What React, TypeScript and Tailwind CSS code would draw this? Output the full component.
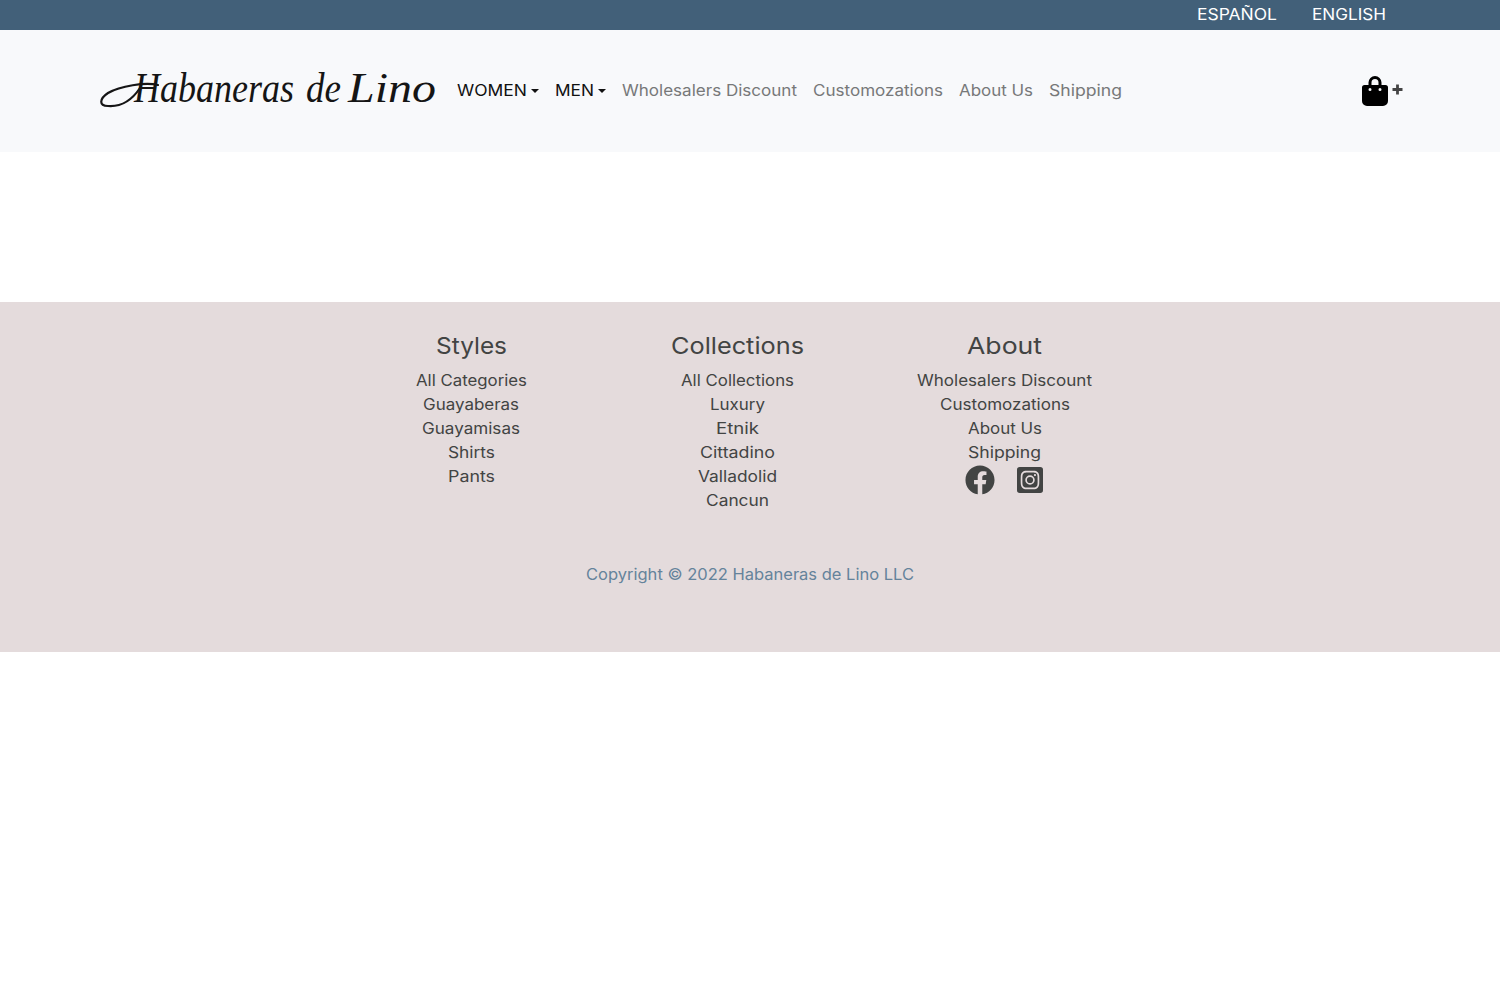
import { useLayoutEffect, useRef } from "react";
import { FaFacebook, FaInstagramSquare } from "react-icons/fa";

/* Text stretched horizontally so that it fills the given width. */
function Wide({ text, width, className = "" }: { text: string; width: number; className?: string }) {
  const ref = useRef<HTMLSpanElement>(null);
  useLayoutEffect(() => {
    const el = ref.current;
    if (!el) return;
    el.style.transform = "none";
    el.style.transform = `scaleX(${width / el.getBoundingClientRect().width})`;
  }, [text, width]);
  return (
    <span className={`inline-block text-left whitespace-nowrap ${className}`} style={{ width }}>
      <span ref={ref} className="inline-block origin-left">
        {text}
      </span>
    </span>
  );
}

function Caret() {
  return <span className="ml-1 -mt-px inline-block border-x-[4.5px] border-t-[4.5px] border-x-transparent border-t-current" />;
}

type Item = [string, number];

const navLinks: Item[] = [
  ["Wholesalers Discount", 175],
  ["Customozations", 130],
  ["About Us", 74],
  ["Shipping", 73],
];

const columns: { title: Item; links: Item[] }[] = [
  {
    title: ["Styles", 71],
    links: [["All Categories", 111], ["Guayaberas", 96], ["Guayamisas", 98], ["Shirts", 47], ["Pants", 47]],
  },
  {
    title: ["Collections", 133],
    links: [["All Collections", 113], ["Luxury", 55], ["Etnik", 43], ["Cittadino", 75], ["Valladolid", 79], ["Cancun", 63]],
  },
  { title: ["About", 75], links: navLinks },
];

function Logo() {
  return (
    <a
      className="relative mt-[-8px] flex h-[54px] w-[337px] items-center pl-[34px] text-[#151515] italic"
      style={{ fontFamily: '"Liberation Serif", serif' }}
    >
      <svg className="absolute left-0 top-[3px]" width="66" height="54" fill="none" stroke="currentColor" strokeWidth="2.2">
        <path d="M58 22C45 19 20 23 8 30C-1 36 -1 43 8 43C21 44 32 37 40 25" strokeLinecap="round" />
      </svg>
      <Wide text="Habaneras" width={160} className="text-[43px] leading-none" />
      <Wide text="de" width={35} className="ml-[12px] text-[43px] leading-none" />
      <Wide text="Lino" width={88} className="ml-[7px] text-[43px] leading-none" />
    </a>
  );
}

export default function App() {
  return (
    <div className="min-h-screen bg-white text-[15.5px] leading-6" style={{ fontFamily: "Inter, sans-serif" }}>
      <div className="flex h-[30px] items-center justify-end gap-[35px] bg-[#426079] pr-[114px] text-white">
        <Wide text="ESPAÑOL" width={80} />
        <Wide text="ENGLISH" width={74} />
      </div>

      <header className="flex h-[122px] items-center bg-[#f8f9fb] pr-[97px] pl-[100px]">
        <Logo />
        <nav className="ml-5 flex gap-4 text-[#777879]">
          <a className="flex items-center text-[#111]">
            <Wide text="WOMEN" width={70} />
            <Caret />
          </a>
          <a className="flex items-center text-[#111]">
            <Wide text="MEN" width={39} />
            <Caret />
          </a>
          {navLinks.map(([t, w]) => (
            <a key={t}>
              <Wide text={t} width={w} />
            </a>
          ))}
        </nav>
        <div className="ml-auto flex items-center gap-1">
          <svg width="26" height="30" viewBox="0 0 26 30">
            <path
              fillRule="evenodd"
              d="M6.500 9V6.500a6.500 6.500 0 0 1 13 0V9h4a2.500 2.500 0 0 1 2.500 2.500V25a5 5 0 0 1-5 5H5a5 5 0 0 1-5-5V11.500A2.500 2.500 0 0 1 2.500 9zM9.500 9h7V6.500a3.500 3.500 0 0 0-7 0zM8 12a1.500 1.500 0 1 0 0 3a1.500 1.500 0 0 0 0-3zM18 12a1.500 1.500 0 1 0 0 3a1.500 1.500 0 0 0 0-3z"
            />
          </svg>
          <svg className="-mt-1" width="11" height="11" viewBox="0 0 11 11" stroke="#444" strokeWidth="2.8">
            <path d="M5.500 0.500v10M0.500 5.500h10" />
          </svg>
        </div>
      </header>

      <main className="h-[150px]" />

      <footer className="h-[350px] bg-[#e4dbdc] pt-[29px] text-[#424443]">
        <div className="ml-[338px] grid h-[232px] w-[800px] grid-cols-3">
          {columns.map(({ title, links }, i) => (
            <div key={title[0]} className="flex flex-col items-center">
              <h4 className="mb-[9px] text-[23.5px] leading-[29px]">
                <Wide text={title[0]} width={title[1]} />
              </h4>
              {links.map(([t, w]) => (
                <a key={t} className="h-6">
                  <Wide text={t} width={w} />
                </a>
              ))}
              {i === 2 && (
                <div className="mr-[2px] flex gap-[22px]">
                  <FaFacebook size={30} />
                  <FaInstagramSquare className="h-[30px] w-[26px]" />
                </div>
              )}
            </div>
          ))}
        </div>
        <p className="text-center text-[#65839b]">
          <Wide text="Copyright © 2022 Habaneras de Lino LLC" width={328} />
        </p>
      </footer>
    </div>
  );
}
